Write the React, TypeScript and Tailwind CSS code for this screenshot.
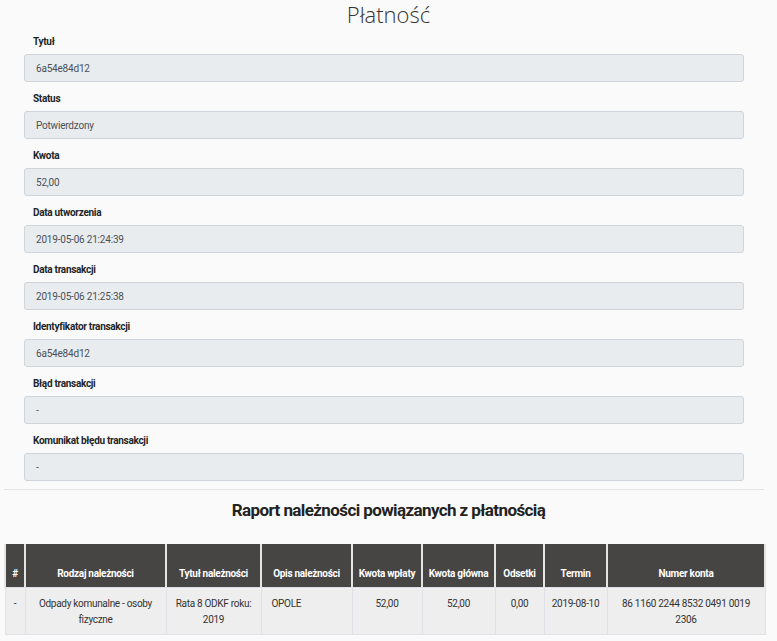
import React from 'react';

const fields = [
  { label: 'Tytuł', value: '6a54e84d12' },
  { label: 'Status', value: 'Potwierdzony' },
  { label: 'Kwota', value: '52,00' },
  { label: 'Data utworzenia', value: '2019-05-06 21:24:39' },
  { label: 'Data transakcji', value: '2019-05-06 21:25:38' },
  { label: 'Identyfikator transakcji', value: '6a54e84d12' },
  { label: 'Błąd transakcji', value: '-' },
  { label: 'Komunikat błędu transakcji', value: '-' },
];

const cols = [
  { h: '#', w: 'w-[20px]', v: '-', align: 'text-center' },
  { h: 'Rodzaj należności', w: 'w-[141px]', v: 'Odpady komunalne - osoby fizyczne', align: 'text-center' },
  { h: 'Tytuł należności', w: 'w-[95px]', v: 'Rata 8 ODKF roku: 2019', align: 'text-center' },
  { h: 'Opis należności', w: 'w-[91px]', v: 'OPOLE', align: 'text-left' },
  { h: 'Kwota wpłaty', w: 'w-[70px]', v: '52,00', align: 'text-center' },
  { h: 'Kwota główna', w: 'w-[73px]', v: '52,00', align: 'text-center' },
  { h: 'Odsetki', w: 'w-[49px]', v: '0,00', align: 'text-center' },
  { h: 'Termin', w: 'w-[63px]', v: '2019-08-10', align: 'text-center' },
  { h: 'Numer konta', w: 'w-[158px]', v: '86 1160 2244 8532 0491 0019 2306', align: 'text-center' },
];

export default function App() {
  return (
    <div className="min-h-[641px] w-[777px] bg-[#fafafa] text-[#212529]" style={{ fontFamily: 'Roboto, "Liberation Sans", sans-serif' }}>
      <h1 className="text-center text-[22px] font-light leading-[28px] text-[#333]" style={{ fontFamily: '"Open Sans", sans-serif' }}>
        Płatność
      </h1>
      <div className="ml-[24px] w-[720px]">
        {fields.map((f) => (
          <div key={f.label} className="h-[57px]">
            <div className="pl-[9px] pt-[6px] text-[10px] font-bold leading-[16px] tracking-[-0.3px]">{f.label}</div>
            <div className="mt-[4px] flex h-[28px] items-center rounded-[3px] border border-[#ced4da] bg-[#e9ecef] px-[11px] text-[10px] tracking-[-0.2px] text-[#495057]">
              {f.value}
            </div>
          </div>
        ))}
      </div>
      <div className="mx-[4px] mt-[5px] w-[760px] border-t border-[#e5e5e5]" />
      <h2 className="mt-[9px] text-center text-[17px] font-bold leading-[22px] tracking-[-0.6px] text-[#222]">
        Raport należności powiązanych z płatnością
      </h2>
      <table className="ml-[4px] mt-[23px] w-[760px] table-fixed border-collapse text-[10px] tracking-[-0.3px]">
        <thead>
          <tr className="h-[43px] bg-[#474444] text-white">
            {cols.map((c) => (
              <th key={c.h} className={`${c.w} border-x-2 border-[#e3e3e3] px-[3px] pb-[6px] align-bottom font-bold leading-[15px] text-center`}>
                {c.h}
              </th>
            ))}
          </tr>
        </thead>
        <tbody>
          <tr className="h-[47px] bg-[#eeeeee] text-[#333]">
            {cols.map((c) => (
              <td key={c.h} className={`border border-[#dee2e6] px-[3px] pt-[8px] align-top leading-[16px] whitespace-normal ${c.align} ${c.align === 'text-left' ? 'pl-[10px]' : ''}`}>
                {c.v}
              </td>
            ))}
          </tr>
        </tbody>
      </table>
    </div>
  );
}
